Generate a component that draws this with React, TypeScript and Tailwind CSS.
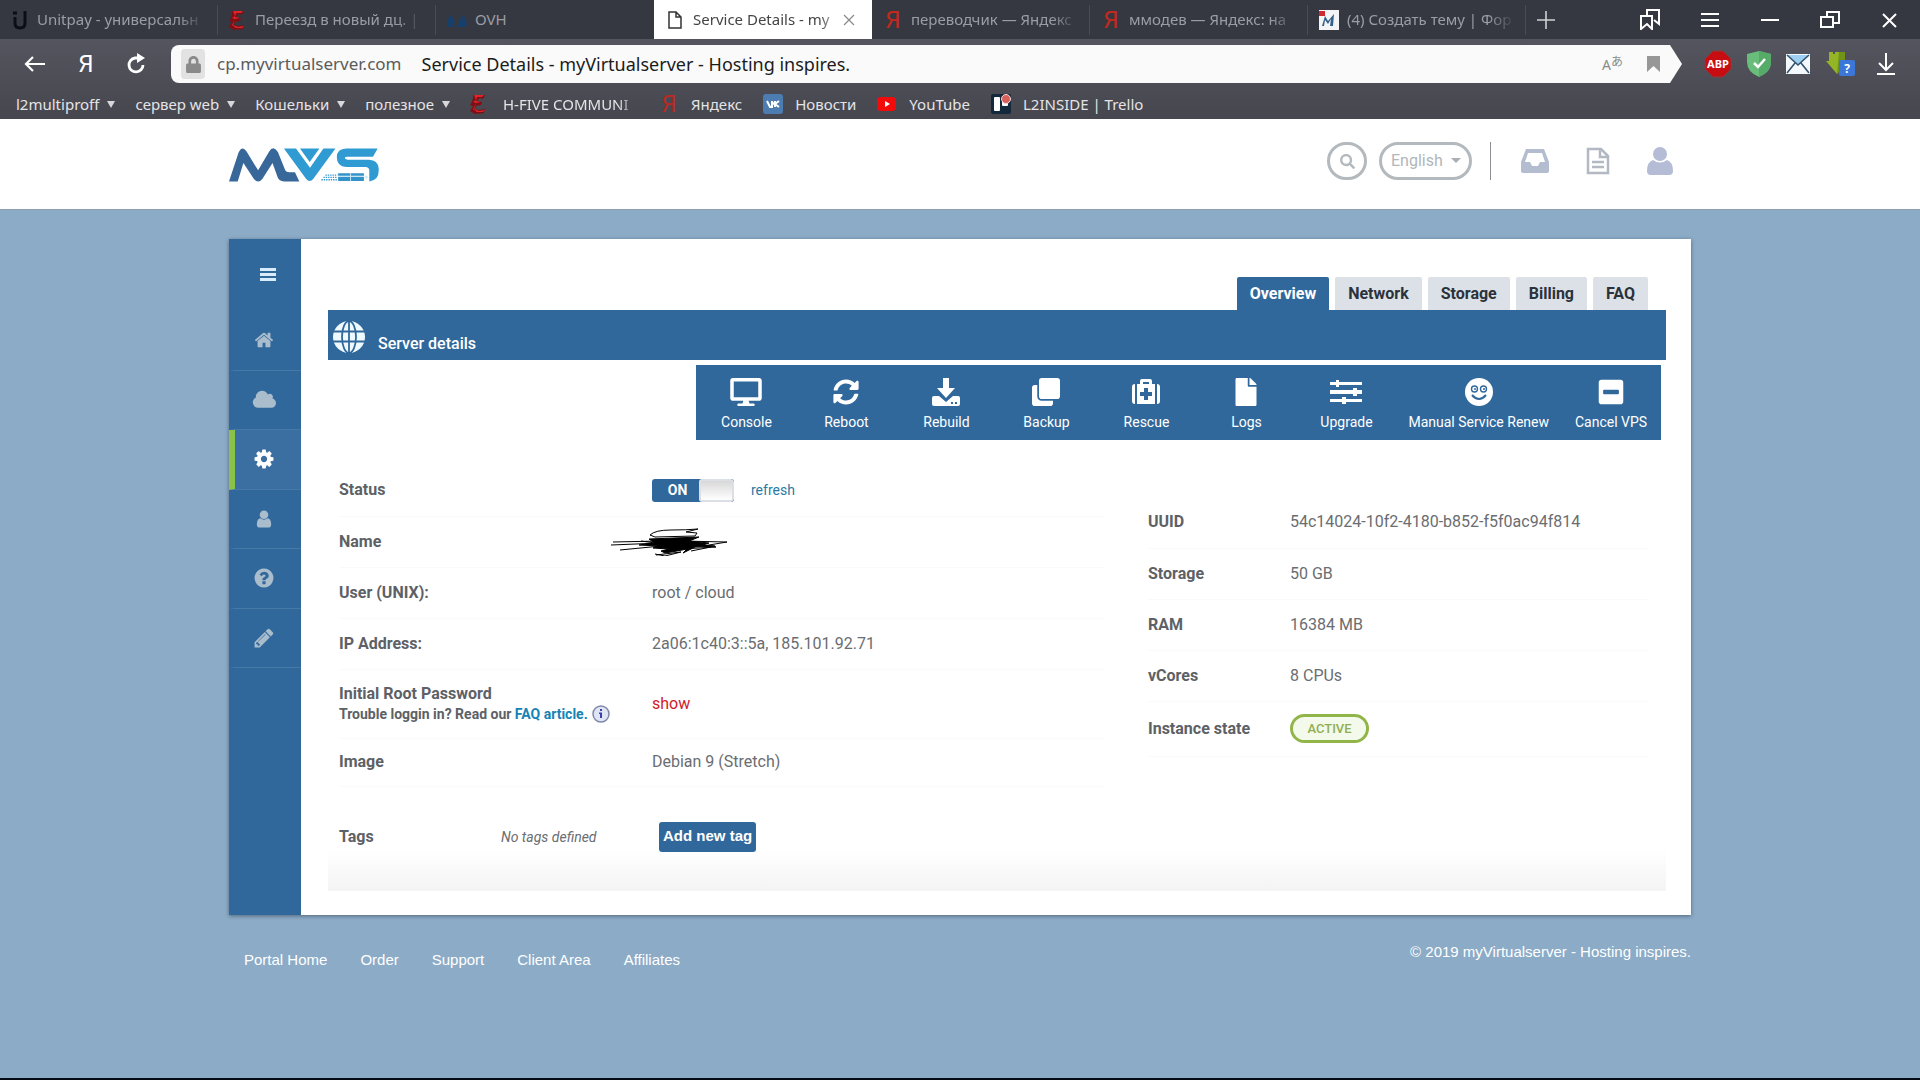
import { useState } from "react";
import type { ReactNode } from "react";
import {
  FaClone,
  FaDesktop,
  FaFile,
  FaLock,
  FaMinusSquare,
  FaSearch,
  FaSyncAlt,
} from "react-icons/fa";

type Item = { label: string; icon: ReactNode };

const ICONS = {
  home: "M1472 992v480q0 26-19 45t-45 19h-384v-384h-256v384h-384q-26 0-45-19t-19-45v-480q0-1 .5-3t.5-3l575-474 575 474q1 2 1 6zm223-69l-62 74q-8 9-21 11h-3q-13 0-21-7l-692-577-692 577q-12 8-24 7-13-2-21-11l-62-74q-8-10-7-23.5t11-21.5l719-599q32-26 76-26t76 26l244 204v-195q0-14 9-23t23-9h192q14 0 23 9t9 23v408l219 182q10 8 11 21.5t-7 23.5z",
  cloud:
    "M1984 1152q0 159-112.5 271.5t-271.5 112.5h-1088q-185 0-316.5-131.5t-131.5-316.5q0-132 71-241.5t187-163.5q-2-28-2-43 0-212 150-362t362-150q158 0 286.5 88t187.5 230q70-62 166-62 106 0 181 75t75 181q0 75-41 138 129 30 213 134.5t84 239.5z",
  cog: "M1152 896q0-106-75-181t-181-75-181 75-75 181 75 181 181 75 181-75 75-181zm512-109v222q0 12-8 23t-20 13l-185 28q-19 54-39 91 35 50 107 138 10 12 10 25t-9 23q-27 37-99 108t-94 71q-12 0-26-9l-138-108q-44 23-91 38-16 136-29 186-7 28-36 28h-222q-14 0-24.5-8.5t-11.5-21.5l-28-184q-49-16-90-37l-141 107q-10 9-25 9-14 0-25-11-126-114-165-168-7-10-7-23 0-12 8-23 15-21 51-66.5t54-70.5q-27-50-41-99l-183-27q-13-2-21-12.5t-8-23.5v-222q0-12 8-23t19-13l186-28q14-46 39-92-40-57-107-138-10-12-10-24 0-10 9-23 26-36 98.5-107.5t94.5-71.5q13 0 26 10l138 107q44-23 91-38 16-136 29-186 7-28 36-28h222q14 0 24.5 8.5t11.5 21.5l28 184q49 16 90 37l142-107q9-9 24-9 13 0 25 10 129 119 165 170 7 8 7 22 0 12-8 23-15 21-51 66.5t-54 70.5q26 50 41 98l183 28q13 2 21 12.5t8 23.5z",
  user: "M1536 1399q0 109-62.5 187t-150.5 78h-854q-88 0-150.5-78t-62.5-187q0-85 8.5-160.5t31.5-152 58.5-131 94-89 134.5-34.5q131 128 313 128t313-128q76 0 134.5 34.5t94 89 58.5 131 31.5 152 8.5 160.5zm-256-887q0 159-112.5 271.5t-271.5 112.5-271.5-112.5-112.5-271.5 112.5-271.5 271.5-112.5 271.5 112.5 112.5 271.5z",
  help: "M1024 1376v-192q0-14-9-23t-23-9h-192q-14 0-23 9t-9 23v192q0 14 9 23t23 9h192q14 0 23-9t9-23zm256-672q0-88-55.5-163t-138.5-116-170-41q-243 0-371 213-15 24 8 42l132 100q7 6 19 6 16 0 25-12 53-68 86-92 34-24 86-24 48 0 85.5 26t37.5 59q0 38-20 61t-68 45q-63 28-115.5 86.5t-52.5 125.5v36q0 14 9 23t23 9h192q14 0 23-9t9-23q0-19 21.5-49.5t54.5-49.5q32-18 49-28.5t46-35 44.5-48 28-60.5 12.5-81zm384 192q0 209-103 385.5t-279.5 279.5-385.5 103-385.5-103-279.5-279.5-103-385.5 103-385.5 279.5-279.5 385.5-103 385.5 103 279.5 279.5 103 385.5z",
  pencil:
    "M491 1536l91-91-235-235-91 91v107h128v128h107zm523-928q0-22-22-22-10 0-17 7l-542 542q-7 7-7 17 0 22 22 22 10 0 17-7l542-542q7-7 7-17zm-54-192l416 416-832 832h-416v-416zm683 96q0 53-37 90l-166 166-416-416 166-165q36-38 90-38 53 0 91 38l235 234q37 39 37 91z",
};

function Glyph({ d, className, wide }: { d: string; className: string; wide?: boolean }) {
  return (
    <svg viewBox={wide ? "0 0 1984 1792" : "0 0 1792 1792"} className={className} fill="currentColor">
      <path d={d} />
    </svg>
  );
}

function YandexMark({ className = "" }: { className?: string }) {
  return (
    <span
      className={`w-5 shrink-0 text-center font-['Liberation_Sans_Narrow','Roboto',sans-serif] text-2xl leading-6 ${className}`}
    >
      Я
    </span>
  );
}

function EpicMark() {
  return (
    <svg viewBox="0 0 18 20" className="h-5 w-[18px] shrink-0">
      <path d="M3 1h12l-2 4-3-1-3 3 5 1-1 3-5 1-1 3 4 1 6-1-1 4-9 1-5-3 3-5-3-1 2-3 1-4z" fill="#7e1015" />
      <path d="M4 1h10l-2 2H7L6 7l5 1-5 1-2 6 5 2 6-1-2 2H7l-4-3 3-6-3-1 3-2z" fill="#e0242a" />
    </svg>
  );
}

const TABS: Item[] = [
  {
    label: "Unitpay - универсальн",
    icon: (
      <svg viewBox="0 0 18 22" className="h-[22px] w-[18px] shrink-0" fill="none" stroke="#0b0e18" strokeWidth="3">
        <path d="M4 8v6q0 5 5 5t5-5V2" />
        <path d="M2 4h4" />
      </svg>
    ),
  },
  { label: "Переезд в новый дц. |", icon: <EpicMark /> },
  {
    label: "OVH",
    icon: (
      <svg viewBox="0 0 20 16" className="h-4 w-5 shrink-0" fill="#173f6b">
        <path d="M1 15q-2-7 3-12l4 6-3 6zM19 15q2-7-3-12l-7 12h4z" />
      </svg>
    ),
  },
  {
    label: "Service Details - my",
    icon: (
      <svg viewBox="0 0 14 18" className="mx-[3px] h-[18px] w-3.5 shrink-0" fill="none" stroke="#333" strokeWidth="1.5">
        <path d="M1 1h7l5 5v11H1zM8 1v5h5" />
      </svg>
    ),
  },
  { label: "переводчик — Яндекс", icon: <YandexMark className="text-[#c5281c]" /> },
  { label: "ммодев — Яндекс: на", icon: <YandexMark className="text-[#c5281c]" /> },
  {
    label: "(4) Создать тему | Фор",
    icon: (
      <svg viewBox="0 0 20 20" className="h-5 w-5 shrink-0">
        <path d="M0 0h20v20H0z" fill="#f2f4f6" />
        <path d="M3 16l3-10 3 5 6-7-1 12h-3l1-7-3 5-3-4-1 6z" fill="#34618b" />
        <path d="M0 1h6v5H0z" fill="#cf2a33" />
      </svg>
    ),
  },
];

function BrowserTabs() {
  return (
    <div className="flex h-[39px] items-center bg-[#363841] text-white">
      <div className="flex h-full min-w-0">
        {TABS.map((tab, i) => (
          <button
            key={tab.label}
            type="button"
            className={`flex h-full w-[218px] min-w-0 shrink items-center pl-[11px] text-left ${
              i == 3 ? "bg-white text-[#444]" : "text-[#9b9da6]"
            }`}
          >
            {tab.icon}
            <span
              className={`ml-2 whitespace-nowrap text-[15px] [mask-image:linear-gradient(to_right,black_84%,transparent)] ${
                i == 3 ? "w-[150px]" : i == 2 ? "" : "w-[168px]"
              } ${i == 2 ? "[mask-image:none]" : ""}`}
            >
              {tab.label}
            </span>
            {i == 3 ? (
              <svg viewBox="0 0 12 12" className="h-3 w-3 shrink-0" stroke="#888" strokeWidth="1.2">
                <path d="M1 1l10 10M11 1L1 11" />
              </svg>
            ) : (
              i != 2 && <span className="ml-auto h-[30px] w-px shrink-0 bg-[#4a4c55]"></span>
            )}
          </button>
        ))}
      </div>
      <button type="button" aria-label="New tab" className="ml-0.5 p-2">
        <svg viewBox="0 0 20 20" className="h-5 w-5" stroke="#d0d1d4" strokeWidth="1.6">
          <path d="M10 1v18M1 10h18" />
        </svg>
      </button>
      <div className="ml-auto flex gap-10 pr-5">
        <button type="button" aria-label="Bookmarks">
          <svg viewBox="0 0 20 21" className="h-[21px] w-5" fill="none" stroke="white" strokeWidth="2">
            <path d="M1 7h11v13l-5-5-6 5zM7 7V1h12v14l-5-4" />
          </svg>
        </button>
        <button type="button" aria-label="Menu">
          <svg viewBox="0 0 20 20" className="h-5 w-5" stroke="white" strokeWidth="2">
            <path d="M1 4h18M1 10h18M1 16h18" />
          </svg>
        </button>
        <button type="button" aria-label="Minimize">
          <svg viewBox="0 0 20 20" className="h-5 w-5" stroke="white" strokeWidth="2">
            <path d="M1 10h18" />
          </svg>
        </button>
        <button type="button" aria-label="Restore">
          <svg viewBox="0 0 20 20" className="h-5 w-5" fill="none" stroke="white" strokeWidth="2">
            <path d="M1 7h12v10H1zM7 7V2h12v11h-6" />
          </svg>
        </button>
        <button type="button" aria-label="Close">
          <svg viewBox="0 0 20 20" className="h-5 w-5" stroke="white" strokeWidth="2">
            <path d="M3 4l13 13M16 4L3 17" />
          </svg>
        </button>
      </div>
    </div>
  );
}

function AddressBar() {
  return (
    <div className="flex h-[50px] items-center text-white">
      <div className="flex w-[171px] shrink-0 items-center gap-[30px] pl-6">
        <button type="button" aria-label="Back">
          <svg viewBox="0 0 22 18" className="h-[18px] w-[22px]" fill="none" stroke="white" strokeWidth="2.2">
            <path d="M9 2L2 9l7 7M2 9h19" />
          </svg>
        </button>
        <button type="button" aria-label="Yandex" className="flex">
          <YandexMark />
        </button>
        <button type="button" aria-label="Reload">
          <svg viewBox="0 0 20 22" className="h-[22px] w-5" fill="none" stroke="white" strokeWidth="2.8">
            <path d="M12 5H9a7 7 0 1 0 8 7" />
            <path d="M11 0l8 5-8 5z" fill="white" stroke="none" />
          </svg>
        </button>
      </div>
      <div className="flex h-[38px] min-w-0 flex-1 items-center rounded-l-lg bg-[#f9faf9] pl-2.5 pr-[22px] text-lg [clip-path:polygon(0_0,calc(100%-12px)_0,100%_50%,calc(100%-12px)_100%,0_100%)]">
        <span className="flex h-[30px] w-6 shrink-0 items-center justify-center rounded-sm bg-[#e2e2e2]">
          <FaLock className="h-[17px] w-[15px] text-[#8a8a8a]"></FaLock>
        </span>
        <button type="button" className="ml-3 shrink-0 text-[17px] text-[#5c5c5c]">
          cp.myvirtualserver.com
        </button>
        <input
          type="text"
          aria-label="Address"
          defaultValue="Service Details - myVirtualserver - Hosting inspires."
          className="ml-5 min-w-0 flex-1 bg-transparent text-[#1c1c1c] outline-none"
        />
        <button type="button" aria-label="Translate" className="mr-6 flex items-end text-[#8b8b8b]">
          <span className="text-sm leading-4">A</span>
          <span className="pb-1.5 font-['Noto_Sans_CJK_JP',sans-serif] text-xs leading-3">あ</span>
        </button>
        <button type="button" aria-label="Bookmark this page">
          <svg viewBox="0 0 13 16" className="h-4 w-[13px]" fill="#979797">
            <path d="M0 0h13v16l-6.5-6L0 16z" />
          </svg>
        </button>
      </div>
      <div className="flex shrink-0 items-center gap-[15px] pl-[22px] pr-6">
        <svg viewBox="0 0 28 28" className="h-7 w-7">
          <path d="M9 1h10l8 8v10l-8 8H9l-8-8V9z" fill="#c80d12" stroke="#8b3a3c" />
          <text x="14" y="18" textAnchor="middle" fontSize="11" fontWeight="700" fill="white">
            ABP
          </text>
        </svg>
        <svg viewBox="0 0 24 26" className="h-[26px] w-6">
          <path d="M12 0l12 3v8q0 10-12 15Q0 21 0 11V3z" fill="#68bd7b" />
          <path d="M12 0l12 3v8q0 10-12 15z" fill="#56ab69" />
          <path d="M7 12l4 4 7-8" fill="none" stroke="white" strokeWidth="2.5" />
        </svg>
        <svg viewBox="0 0 24 20" className="h-5 w-6">
          <path d="M0 0h24v20H0z" fill="#f3f8fc" />
          <path d="M1 1h22L12 11z" fill="#9fd0f2" />
          <path d="M1 1l11 10L23 1M1 19l8-10M23 19L15 9" fill="none" stroke="#35536e" strokeWidth="1.6" />
        </svg>
        <svg viewBox="0 0 30 26" className="h-[26px] w-[30px]">
          <path d="M4 1h4v2h2V1h4v2h2V1h4v9h3L12 23 1 10h3z" fill="#93b526" />
          <path d="M14 1h6v9h3L12 23z" fill="#6f9418" />
          <rect x="14" y="9" width="16" height="16" rx="2" fill="#3b77d8" />
          <text x="22" y="22" textAnchor="middle" fontSize="12" fontWeight="700" fill="white">
            ?
          </text>
        </svg>
        <button type="button" aria-label="Downloads" className="ml-1.5">
          <svg viewBox="0 0 20 24" className="h-6 w-5" fill="none" stroke="white" strokeWidth="2">
            <path d="M10 1v17M3 11l7 7 7-7M1 22h18" />
          </svg>
        </button>
      </div>
    </div>
  );
}

const FOLDERS = ["l2multiproff", "сервер web", "Кошельки", "полезное"];

const BOOKMARKS: Item[] = [
  { label: "Яндекс", icon: <YandexMark className="text-[#b92a22]" /> },
  {
    label: "Новости",
    icon: (
      <svg viewBox="0 0 20 20" className="h-5 w-5">
        <rect width="20" height="20" rx="3" fill="#4c7cb0" />
        <path d="M4 7l3 6h2V7M9 10q3 0 3-3M12 7v6M16 7l-4 3 4 3" fill="none" stroke="white" strokeWidth="2" />
      </svg>
    ),
  },
  {
    label: "YouTube",
    icon: (
      <svg viewBox="0 0 20 20" className="h-5 w-5">
        <rect y="3" width="19" height="14" rx="4" fill="#f30a0a" />
        <path d="M8 7l5 3-5 3z" fill="white" />
      </svg>
    ),
  },
  {
    label: "L2INSIDE | Trello",
    icon: (
      <svg viewBox="0 0 20 20" className="h-5 w-5">
        <rect width="20" height="20" rx="2" fill="#14283c" />
        <rect x="3" y="3" width="6" height="14" rx="1" fill="white" />
        <rect x="11" y="4" width="6" height="8" rx="1" fill="white" />
        <circle cx="15" cy="5" r="4.5" fill="#d9615c" stroke="#f4d9d6" />
      </svg>
    ),
  },
];

function BookmarksBar() {
  return (
    <nav className="flex h-[30px] items-center whitespace-nowrap pl-4 text-[15px] text-[#e4e4e7]">
      {FOLDERS.map((name) => (
        <button key={name} type="button" className="mr-5 flex items-center gap-2">
          {name}
          <svg viewBox="0 0 8 7" className="h-[7px] w-2" fill="#d8d8dc">
            <path d="M0 0h8L4 7z" />
          </svg>
        </button>
      ))}
      <a href="#h-five" className="mr-5 flex items-center gap-[15px]">
        <EpicMark></EpicMark>
        <span className="w-[136px] [mask-image:linear-gradient(to_right,black_85%,transparent)]">
          H-FIVE COMMUNI
        </span>
      </a>
      {BOOKMARKS.map((b) => (
        <a key={b.label} href="#bookmark" className="mr-[21px] flex items-center gap-3">
          {b.icon}
          {b.label}
        </a>
      ))}
    </nav>
  );
}

function Logo() {
  return (
    <svg viewBox="58 86 448 100" className="mt-0.5 h-[34px] w-[150px]">
      <path
        d="M58 185L86 100Q97 76 110 95L145 152 178 96Q190 76 204 97L226 152Q229 158 238 158H255L268 185H222Q208 185 203 172L188 130 158 177Q145 194 132 177L101 130 84 185z"
        fill="#386799"
      />
      <path d="M222 87h36l42 57 40-57h36l-66 90q-11 14-22 0zM270 87h58l-29 40z" fill="#2f9bd2" />
      <path
        d="M502 87H408Q380 88 380 113 380 141 408 142H465Q477 142 477 153V185Q505 182 505 154V146Q503 121 476 120H412Q404 119 404 115T412 111H488z"
        fill="#2f9bd2"
      />
      <path d="M384 161h77v7h-77zM384 171h77v13h-77z" fill="#3293ca" />
      <path d="M421 160v25M463 172h10M468 167v10" stroke="#bfe3f4" strokeWidth="3" />
      <path d="M334 180h48M340 173h40M346 166h36" stroke="#3293ca" strokeWidth="4" strokeDasharray="4 3" />
    </svg>
  );
}

function SiteHeader() {
  return (
    <header className="border-b border-[#8d9fae] bg-white">
      <div className="mx-auto flex h-[90px] w-full max-w-[1462px] items-center pr-[18px]">
        <a href="#home" aria-label="MVS">
          <Logo></Logo>
        </a>
        <div className="ml-auto flex items-center pb-1.5">
          <button
            type="button"
            aria-label="Search"
            className="flex h-[38px] w-10 items-center justify-center rounded-full border-3 border-[#b3b9bd] text-[#b3b9bd]"
          >
            <FaSearch className="h-[15px] w-[15px]"></FaSearch>
          </button>
          <div className="relative ml-3">
            <select
              aria-label="Language"
              className="h-[38px] w-[93px] appearance-none rounded-full border-3 border-[#b3b9bd] pl-[9px] text-base text-[#b0b6ba]"
            >
              <option>English</option>
            </select>
            <svg viewBox="0 0 10 5" className="pointer-events-none absolute right-[11px] top-4 h-[5px] w-2.5" fill="#a9afb3">
              <path d="M0 0h10L5 5z" />
            </svg>
          </div>
          <span className="ml-[18px] h-[38px] w-px bg-[#8b8f93]"></span>
          <a href="#inbox" aria-label="Inbox" className="ml-[30px] text-[#b4bcd0]">
            <svg viewBox="0 0 28 24" className="h-6 w-7" fill="currentColor">
              <path fillRule="evenodd" d="M5 0h18l5 13v9q0 2-2 2H2q-2 0-2-2v-9zM7 4L4 13h5l2 4h6l2-4h5L21 4z" />
            </svg>
          </a>
          <a href="#documents" aria-label="Documents" className="ml-[37px] text-[#b3b9c2]">
            <svg viewBox="0 0 24 28" className="h-7 w-6" fill="none" stroke="currentColor" strokeWidth="2.5">
              <path d="M2 2h13l7 7v17H2zM14 2v8h8M6 15h12M6 20h12" />
            </svg>
          </a>
          <a href="#account" aria-label="Account" className="ml-[37px] text-[#b4bcd6]">
            <svg viewBox="0 0 26 28" className="h-7 w-[26px]" fill="currentColor">
              <circle cx="13" cy="7" r="7" />
              <path d="M6 13q7 5 14 0 6 2 6 11 0 4-4 4H4q-4 0-4-4 0-9 6-11z" />
            </svg>
          </a>
        </div>
      </div>
    </header>
  );
}

const SIDE_LINKS = [
  { name: "Home", icon: <Glyph d={ICONS.home} className="h-5 w-5" /> },
  { name: "Cloud", icon: <Glyph wide d={ICONS.cloud} className="h-[22px] w-6" /> },
  { name: "Services", icon: <Glyph d={ICONS.cog} className="h-[22px] w-[22px]" /> },
  { name: "Account", icon: <Glyph d={ICONS.user} className="h-5 w-5" /> },
  { name: "Help", icon: <Glyph d={ICONS.help} className="h-[22px] w-[22px]" /> },
  { name: "Edit", icon: <Glyph d={ICONS.pencil} className="h-[22px] w-[22px]" /> },
];

function Sidebar() {
  return (
    <aside className="w-[72px] shrink-0 bg-[#31689b]">
      <button type="button" aria-label="Toggle menu" className="flex h-[72px] w-full items-center justify-center pl-1.5">
        <svg viewBox="0 0 16 14" className="h-3.5 w-4" fill="#d9ecfb">
          <path d="M0 0h16v3H0zM0 5h16v3H0zM0 10h16v3H0z" />
        </svg>
      </button>
      <nav className="flex h-[357px] flex-col">
        {SIDE_LINKS.map(({ name, icon }) => (
          <a
            key={name}
            href="#section"
            aria-label={name}
            className={`flex flex-1 items-center justify-center border-b border-l-6 border-b-[#4579a8] pr-2 ${
              name == "Services"
                ? "border-l-[#8ac249] bg-[#3c6fa1] text-white"
                : "border-l-[#31689b] text-[#a9bdcd]"
            }`}
          >
            {icon}
          </a>
        ))}
      </nav>
    </aside>
  );
}

const SECTIONS = ["Overview", "Network", "Storage", "Billing", "FAQ"];

const ACTIONS: Item[] = [
  { label: "Console", icon: <FaDesktop className="h-7 w-8" /> },
  { label: "Reboot", icon: <FaSyncAlt className="h-[26px] w-[26px]" /> },
  {
    label: "Rebuild",
    icon: (
      <svg viewBox="0 0 28 28" className="h-7 w-7" fill="currentColor">
        <path d="M11 0h6v10h6l-9 10-9-10h6z" />
        <path fillRule="evenodd" d="M2 18h5l7 6 7-6h5q2 0 2 2v6q0 2-2 2H2q-2 0-2-2v-6q0-2 2-2zm17 6v2h2v-2zm4 0v2h2v-2z" />
      </svg>
    ),
  },
  { label: "Backup", icon: <FaClone className="h-7 w-7" /> },
  {
    label: "Rescue",
    icon: (
      <svg viewBox="0 0 28 26" className="h-[26px] w-7" fill="currentColor">
        <path fillRule="evenodd" d="M5 5h3V2q0-2 2-2h8q2 0 2 2v3h3v20H5zm6-2v2h6V3zm1 6v4H8v4h4v4h4v-4h4v-4h-4V9z" />
        <path d="M3 5v20q-3 0-3-3V8q0-3 3-3zM25 5v20q3 0 3-3V8q0-3-3-3z" />
      </svg>
    ),
  },
  { label: "Logs", icon: <FaFile className="h-7 w-[22px]" /> },
  {
    label: "Upgrade",
    icon: (
      <svg viewBox="0 0 32 26" className="h-[26px] w-8" fill="currentColor">
        <path d="M0 3h32v3H0zM0 11h32v4H0zM0 20h32v3H0zM6 1h3v7H6zM23 9h4v8h-4zM12 18h4v7h-4z" />
      </svg>
    ),
  },
  {
    label: "Manual Service Renew",
    icon: (
      <svg viewBox="0 0 28 28" className="h-7 w-7" fill="none" stroke="#31689b" strokeWidth="1.4">
        <circle cx="14" cy="14" r="14" fill="white" stroke="none" />
        <circle cx="9.5" cy="11" r="3" />
        <circle cx="18.5" cy="11" r="3" />
        <path d="M9 11h2M18 11h2" />
        <path d="M7 17q7 8 14 0" strokeWidth="2" />
      </svg>
    ),
  },
  { label: "Cancel VPS", icon: <FaMinusSquare className="h-7 w-7" /> },
];

function StatusSwitch() {
  const [on, setOn] = useState(true);

  return (
    <label className="flex h-[23px] w-[82px] overflow-hidden rounded-[3px] bg-[#31689b]">
      <input
        type="checkbox"
        aria-label="Server power"
        checked={on}
        onChange={() => setOn(!on)}
        className="sr-only"
      />
      <span className="w-[47px] pl-1 text-center text-sm font-bold leading-[23px] text-white">
        {on ? "ON" : "OFF"}
      </span>
      <span className="flex-1 rounded-[3px] border-2 border-[#dcdfe3] bg-linear-to-b from-[#d8d8d8] to-white"></span>
    </label>
  );
}

function Scribble() {
  return (
    <svg viewBox="0 0 116 28" className="-ml-[41px] h-7 w-[116px]" fill="none" stroke="black">
      <path d="M39 7Q44 2 60 2T87 1L75 4 86 5 84 8 44 9 39 7" />
      <path d="M2 14L50 13M0 17L50 15M9 22L50 18M30 13L80 20M45 27L70 24 54 28 44 26M80 23L100 19M70 13L116 14 92 18 105 19 70 21" />
      <path d="M38 11L88 9 78 13 98 15 92 17 104 18 84 19 72 25 76 21 66 23 54 25 50 23 58 21 42 20 48 18 28 17 44 15z" fill="black" />
    </svg>
  );
}

function Row({ label, children, className = "h-[51px]" }: { label: ReactNode; children: ReactNode; className?: string }) {
  return (
    <tr className={`border-b border-[#fafafa] ${className}`}>
      <th scope="row" className="p-0 text-left font-bold text-[#5d6166]">
        {label}
      </th>
      <td className="p-0 text-[#6a6d71]">{children}</td>
    </tr>
  );
}

function ServerTables() {
  return (
    <div className="flex items-start justify-between pl-[11px] pr-[17px] pt-[25px]">
      <table className="w-[765px] table-fixed border-collapse">
        <colgroup>
          <col className="w-[313px]" />
          <col />
        </colgroup>
        <tbody>
          <Row label="Status">
            <div className="flex items-center">
              <StatusSwitch></StatusSwitch>
              <a href="#refresh" className="ml-[17px] text-sm text-[#2a7ba3]">
                refresh
              </a>
            </div>
          </Row>
          <Row label="Name">
            <Scribble></Scribble>
          </Row>
          <Row label="User (UNIX):">root / cloud</Row>
          <Row label="IP Address:">2a06:1c40:3::5a, 185.101.92.71</Row>
          <Row
            className="h-[69px]"
            label={
              <>
                <p className="leading-5">Initial Root Password</p>
                <p className="flex items-center text-sm">
                  <span>
                    Trouble loggin in? Read our{" "}
                    <a href="#faq" className="text-[#1583b5]">
                      FAQ article.
                    </a>
                  </span>
                  <svg viewBox="0 0 18 18" className="ml-1 h-[18px] w-[18px]">
                    <circle cx="9" cy="9" r="8" fill="#dfe5f5" stroke="#8089a8" strokeWidth="1.5" />
                    <path d="M8 4h2v2H8zM7 7.5h3V13H8V9H7z" fill="#3842b0" />
                  </svg>
                </p>
              </>
            }
          >
            <button type="button" className="text-[#cf2029]">
              show
            </button>
          </Row>
          <Row className="h-12" label="Image">
            Debian 9 (Stretch)
          </Row>
        </tbody>
      </table>
      <table className="mt-8 w-[501px] table-fixed border-collapse">
        <colgroup>
          <col className="w-[142px]" />
          <col />
        </colgroup>
        <tbody>
          <Row label="UUID">54c14024-10f2-4180-b852-f5f0ac94f814</Row>
          <Row label="Storage">50 GB</Row>
          <Row label="RAM">16384 MB</Row>
          <Row label="vCores">8 CPUs</Row>
          <Row className="h-[55px]" label="Instance state">
            <span className="flex h-[29px] w-[79px] items-center justify-center rounded-full border-3 border-[#91b548] bg-[#f4faeb] text-[13px] font-medium text-[#8fae52]">
              ACTIVE
            </span>
          </Row>
        </tbody>
      </table>
    </div>
  );
}

function ServerPanel() {
  const [section, setSection] = useState("Overview");

  return (
    <section className="min-w-0 flex-1 px-[25px] pb-6 pl-[27px] pt-[38px]">
      <div role="tablist" className="flex justify-end gap-1.5 pr-[18px]">
        {SECTIONS.map((name) => (
          <button
            key={name}
            type="button"
            role="tab"
            aria-selected={section == name}
            onClick={() => setSection(name)}
            className={`h-[33px] rounded-t-xs px-[13px] text-base font-bold ${
              section == name ? "bg-[#31689b] text-white" : "bg-[#dce1e8] text-[#2b323b]"
            }`}
          >
            {name}
          </button>
        ))}
      </div>
      <div className="flex h-[50px] items-center bg-[#31689b] pl-[5px] text-white">
        <svg viewBox="0 0 32 32" className="mt-1 h-8 w-8" fill="none" stroke="#31689b" strokeWidth="1.8">
          <circle cx="16" cy="16" r="16" fill="#eefaff" stroke="none" />
          <ellipse cx="16" cy="16" rx="7" ry="16" />
          <path d="M16 0v32M0 10.500h32M0 20.500h32" />
        </svg>
        <h2 className="ml-[13px] mt-[17px] text-base font-medium">Server details</h2>
      </div>
      <div className="mr-[5px] mt-[5px] flex justify-end">
        <div className="flex bg-[#31689b] text-white">
          {ACTIONS.map(({ label, icon }) => (
            <button
              key={label}
              type="button"
              className="flex h-[75px] min-w-[100px] flex-col items-center px-3 pt-[13px] text-sm"
            >
              <span className="flex h-7 items-center">{icon}</span>
              <span className="mt-1.5 whitespace-nowrap">{label}</span>
            </button>
          ))}
        </div>
      </div>
      <ServerTables></ServerTables>
      <div className="flex h-[104px] items-start bg-linear-to-b from-white from-60% to-[#f4f4f4] pl-[11px] pt-[35px]">
        <div className="flex h-[30px] items-center">
          <span className="w-[162px] font-bold text-[#5d6166]">Tags</span>
          <span className="w-[158px] text-sm italic text-[#6a6d71]">No tags defined</span>
          <button
            type="button"
            className="h-[30px] rounded-[3px] bg-[#31689b] px-1 font-['Liberation_Sans',Arial,sans-serif] text-[15px] font-bold text-white"
          >
            Add new tag
          </button>
        </div>
      </div>
    </section>
  );
}

const FOOTER_LINKS = ["Portal Home", "Order", "Support", "Client Area", "Affiliates"];

export default function App() {
  return (
    <div className="flex min-h-screen flex-col border-b-2 border-[#050b14] bg-[#8babc7] font-['Roboto',sans-serif] text-base">
      <div className="font-['Noto_Sans',sans-serif]">
        <BrowserTabs></BrowserTabs>
        <div className="bg-linear-to-b from-[#54555e] to-[#46464f]">
          <AddressBar></AddressBar>
          <BookmarksBar></BookmarksBar>
        </div>
      </div>
      <SiteHeader></SiteHeader>
      <main className="mx-auto mt-[29px] flex w-full max-w-[1462px] bg-white shadow-[0_1px_4px_rgba(0,0,0,0.4)]">
        <Sidebar></Sidebar>
        <ServerPanel></ServerPanel>
      </main>
      <footer className="mx-auto mt-[26px] flex w-full max-w-[1462px] items-start justify-between pl-[15px] font-['Liberation_Sans',Arial,sans-serif] text-[15px] text-white">
        <nav className="mt-2 flex gap-[33px]">
          {FOOTER_LINKS.map((name) => (
            <a key={name} href="#footer">
              {name}
            </a>
          ))}
        </nav>
        <p>© 2019 myVirtualserver - Hosting inspires.</p>
      </footer>
    </div>
  );
}
